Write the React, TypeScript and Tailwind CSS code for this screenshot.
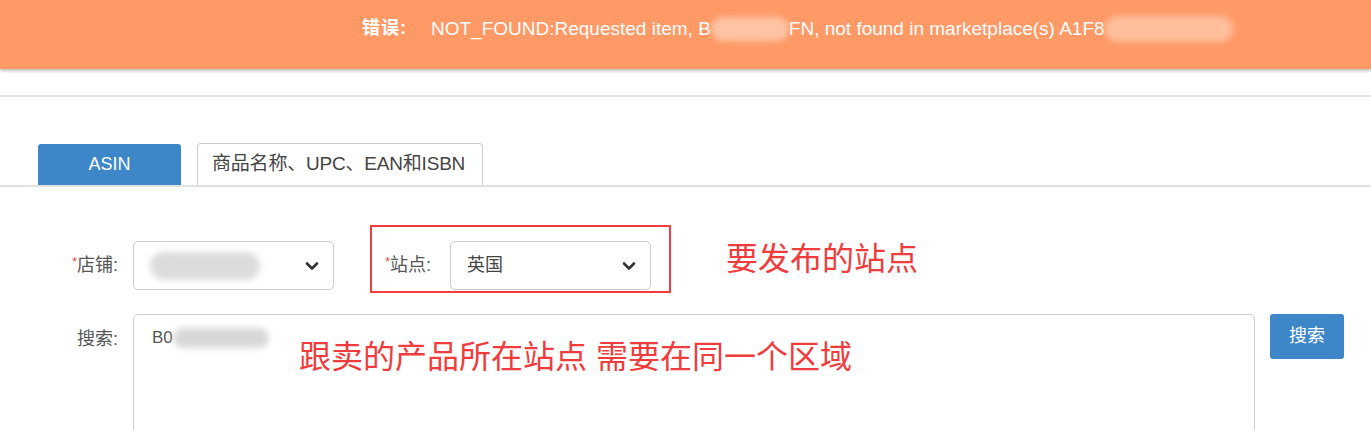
import React from 'react';

const font = { fontFamily: '"Liberation Sans", "Noto Sans CJK SC", sans-serif' };

function Blur({ className }: { className: string }) {
  return <span className={`inline-block align-middle rounded-full blur-[3px] ${className}`} />;
}

function Chevron() {
  return (
    <svg width="14" height="10" viewBox="0 0 14 10" className="shrink-0">
      <path d="M2 2.5 L7 7.5 L12 2.5" fill="none" stroke="#333" strokeWidth="2.6" strokeLinecap="round" strokeLinejoin="round" />
    </svg>
  );
}

function Select({ children }: { children: React.ReactNode }) {
  return (
    <div className="w-[201px] h-[49px] border border-[#ccc] rounded-[5px] bg-white flex items-center justify-between pl-[16px] pr-[14px] text-[18px] text-[#444]">
      <div className="flex items-center">{children}</div>
      <Chevron />
    </div>
  );
}

export default function App() {
  return (
    <div className="w-[1371px] h-[430px] bg-white overflow-hidden relative" style={font}>
      {/* error banner */}
      <div className="h-[69px] bg-[#ff9966] shadow-[0_2px_3px_rgba(0,0,0,0.25)] flex items-start pt-[15px] pl-[362px] text-white text-[18px] relative z-10">
        <span className="font-bold tracking-[1px]">错误:</span>
        <span className="ml-[24px] flex items-center text-[19px]">
          NOT_FOUND:Requested item, B
          <Blur className="w-[78px] h-[24px] bg-[#ffc4a4]" />
          FN, not found in marketplace(s) A1F8
          <Blur className="w-[128px] h-[26px] bg-[#ffbf9c]" />
        </span>
      </div>

      <div className="h-[28px] border-b-2 border-[#e2e2e2]" />

      {/* tabs */}
      <div className="mt-[46px] flex items-end gap-[16px] pl-[38px] border-b-2 border-[#e2e2e2]">
        <div className="w-[143px] h-[41px] bg-[#3d87c9] rounded-t-[3px] flex items-center justify-center text-white text-[18px]">
          ASIN
        </div>
        <div className="w-[286px] h-[42px] border border-b-0 border-[#ccc] rounded-t-[4px] bg-white flex items-center pl-[14px] text-[19px] text-[#444] tracking-[-0.2px]">
          商品名称、UPC、EAN和ISBN
        </div>
      </div>

      {/* form */}
      <div className="relative pt-[54px]">
        <div className="flex items-center">
          <div className="w-[118px] text-right text-[18px] text-[#555]">
            <span className="text-[#e05050] text-[13px] align-top">*</span>店铺:
          </div>
          <div className="ml-[15px]">
            <Select>
              <Blur className="w-[110px] h-[28px] bg-[#dcdcdc]" />
            </Select>
          </div>
          <div className="ml-[51px] w-[50px] whitespace-nowrap text-[18px] text-[#555]">
            <span className="text-[#e05050] text-[13px] align-top">*</span>站点:
          </div>
          <div className="ml-[15px]">
            <Select>英国</Select>
          </div>
        </div>

        <div className="flex items-start mt-[24px]">
          <div className="w-[118px] text-right text-[18px] text-[#555] pt-[12px]">搜索:</div>
          <div className="ml-[15px] w-[1122px] h-[140px] border border-[#ccc] rounded-[5px] pl-[18px] pt-[10px] text-[17px] text-[#555]">
            <span className="flex items-center">
              B0
              <Blur className="w-[96px] h-[20px] bg-[#d8d8d8]" />
            </span>
          </div>
          <button className="ml-[15px] w-[74px] h-[45px] bg-[#3d87c9] rounded-[3px] text-white text-[18px]">搜索</button>
        </div>

        {/* annotations */}
        <div className="absolute left-[370px] top-[38px] w-[301px] h-[68px] border-2 border-[#f03c3c]" />
        <div className="absolute left-[726px] top-[56px] text-[32px] leading-none text-[#f03c3c]">要发布的站点</div>
        <div className="absolute left-[299px] top-[154px] text-[32px] leading-none text-[#f03c3c]">跟卖的产品所在站点 需要在同一个区域</div>
      </div>
    </div>
  );
}
